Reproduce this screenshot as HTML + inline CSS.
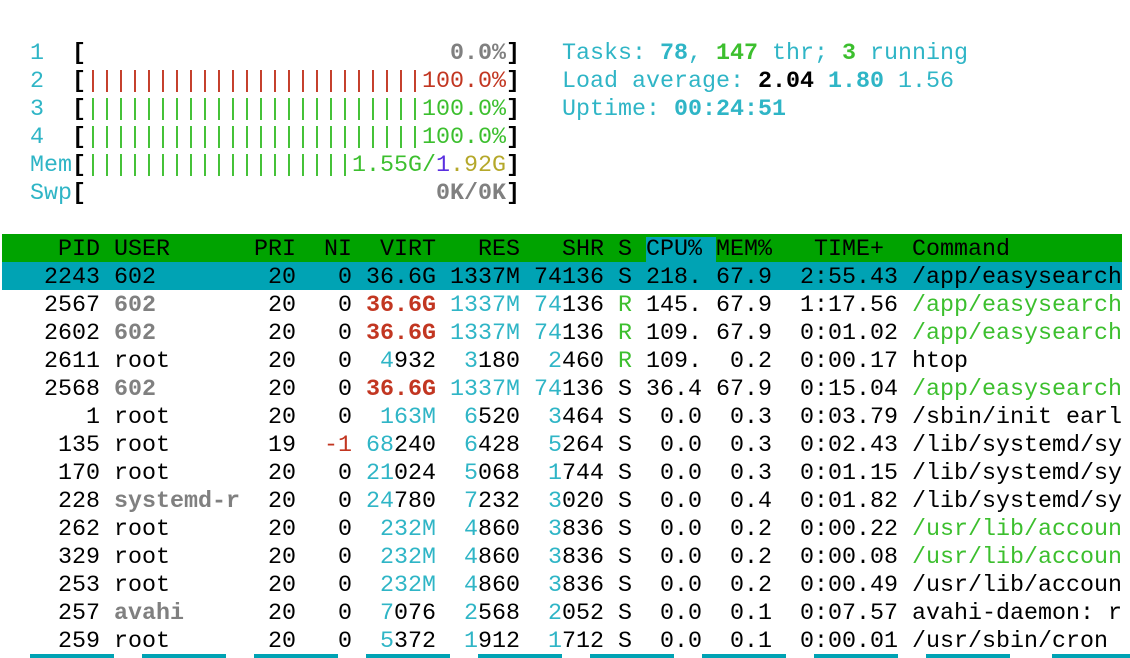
<!DOCTYPE html>
<html><head><meta charset="utf-8"><style>
html,body{margin:0;padding:0;background:#fff;width:1130px;height:658px;overflow:hidden}
.l{position:absolute;left:2px;height:26px;padding-top:2px;line-height:28px;white-space:pre;font-family:"Liberation Mono","DejaVu Sans Mono",monospace;font-size:23.33px;color:#000;width:1120px;overflow:hidden}
.c{color:#2fb5c6}.b{font-weight:bold}.g{color:#3cbf2e}.r{color:#c23621}.k{color:#808080;font-weight:bold}.y{color:#b5a82a}.p{color:#5a2fe0}
.hdr{background:#00a300}.sel{background:#00a3b4}.cb{background:#00a3b4}
.fk{position:absolute;top:654px;height:4px;background:#00a3b4}
</style></head><body>
<div class="l" style="top:38px"><span class="c">  1  </span><span class="b">[</span><span class="k">                          0.0%</span><span class="b">]</span>   <span class="c">Tasks: <b>78</b>, </span><span class="g b">147</span><span class="c"> thr; </span><span class="g b">3</span><span class="c"> running</span></div>
<div class="l" style="top:66px"><span class="c">  2  </span><span class="b">[</span><span class="r">||||||||||||||||||||||||100.0%</span><span class="b">]</span>   <span class="c">Load average: </span><b>2.04</b> <span class="c b">1.80</span> <span class="c">1.56</span></div>
<div class="l" style="top:94px"><span class="c">  3  </span><span class="b">[</span><span class="g">||||||||||||||||||||||||100.0%</span><span class="b">]</span>   <span class="c">Uptime: <b>00:24:51</b></span></div>
<div class="l" style="top:122px"><span class="c">  4  </span><span class="b">[</span><span class="g">||||||||||||||||||||||||100.0%</span><span class="b">]</span></div>
<div class="l" style="top:150px"><span class="c">  Mem</span><span class="b">[</span><span class="g">|||||||||||||||||||1.55G/</span><span class="p">1</span><span class="y">.92G</span><span class="b">]</span></div>
<div class="l" style="top:178px"><span class="c">  Swp</span><span class="b">[</span><span class="k">                         0K/0K</span><span class="b">]</span></div>

<div class="l hdr" style="top:234px">    PID USER      PRI  NI  VIRT   RES   SHR S <span class="cb">CPU% </span>MEM%   TIME+  Command</div>
<div class="l sel" style="top:262px">   2243 602        20   0 36.6G 1337M 74136 S 218. 67.9  2:55.43 /app/easysearch</div>
<div class="l" style="top:290px">   2567 <span class="k">602</span>        20   0 <span class="r b">36.6G</span> <span class="c">1337M</span> <span class="c">74</span>136 <span class="g">R</span> 145. 67.9  1:17.56 <span class="g">/app/easysearch</span></div>
<div class="l" style="top:318px">   2602 <span class="k">602</span>        20   0 <span class="r b">36.6G</span> <span class="c">1337M</span> <span class="c">74</span>136 <span class="g">R</span> 109. 67.9  0:01.02 <span class="g">/app/easysearch</span></div>
<div class="l" style="top:346px">   2611 root       20   0  <span class="c">4</span>932  <span class="c">3</span>180  <span class="c">2</span>460 <span class="g">R</span> 109.  0.2  0:00.17 htop</div>
<div class="l" style="top:374px">   2568 <span class="k">602</span>        20   0 <span class="r b">36.6G</span> <span class="c">1337M</span> <span class="c">74</span>136 S 36.4 67.9  0:15.04 <span class="g">/app/easysearch</span></div>
<div class="l" style="top:402px">      1 root       20   0  <span class="c">163M</span>  <span class="c">6</span>520  <span class="c">3</span>464 S  0.0  0.3  0:03.79 /sbin/init earl</div>
<div class="l" style="top:430px">    135 root       19  <span class="r">-1</span> <span class="c">68</span>240  <span class="c">6</span>428  <span class="c">5</span>264 S  0.0  0.3  0:02.43 /lib/systemd/sy</div>
<div class="l" style="top:458px">    170 root       20   0 <span class="c">21</span>024  <span class="c">5</span>068  <span class="c">1</span>744 S  0.0  0.3  0:01.15 /lib/systemd/sy</div>
<div class="l" style="top:486px">    228 <span class="k">systemd-r</span>  20   0 <span class="c">24</span>780  <span class="c">7</span>232  <span class="c">3</span>020 S  0.0  0.4  0:01.82 /lib/systemd/sy</div>
<div class="l" style="top:514px">    262 root       20   0  <span class="c">232M</span>  <span class="c">4</span>860  <span class="c">3</span>836 S  0.0  0.2  0:00.22 <span class="g">/usr/lib/accoun</span></div>
<div class="l" style="top:542px">    329 root       20   0  <span class="c">232M</span>  <span class="c">4</span>860  <span class="c">3</span>836 S  0.0  0.2  0:00.08 <span class="g">/usr/lib/accoun</span></div>
<div class="l" style="top:570px">    253 root       20   0  <span class="c">232M</span>  <span class="c">4</span>860  <span class="c">3</span>836 S  0.0  0.2  0:00.49 /usr/lib/accoun</div>
<div class="l" style="top:598px">    257 <span class="k">avahi</span>      20   0  <span class="c">7</span>076  <span class="c">2</span>568  <span class="c">2</span>052 S  0.0  0.1  0:07.57 avahi-daemon: r</div>
<div class="l" style="top:626px">    259 root       20   0  <span class="c">5</span>372  <span class="c">1</span>912  <span class="c">1</span>712 S  0.0  0.1  0:00.01 /usr/sbin/cron</div>

<div class="fk" style="left:30px;width:84px"></div>
<div class="fk" style="left:142px;width:84px"></div>
<div class="fk" style="left:254px;width:84px"></div>
<div class="fk" style="left:366px;width:84px"></div>
<div class="fk" style="left:478px;width:84px"></div>
<div class="fk" style="left:590px;width:84px"></div>
<div class="fk" style="left:702px;width:84px"></div>
<div class="fk" style="left:814px;width:84px"></div>
<div class="fk" style="left:926px;width:84px"></div>
<div class="fk" style="left:1052px;width:78px"></div>
</body></html>
